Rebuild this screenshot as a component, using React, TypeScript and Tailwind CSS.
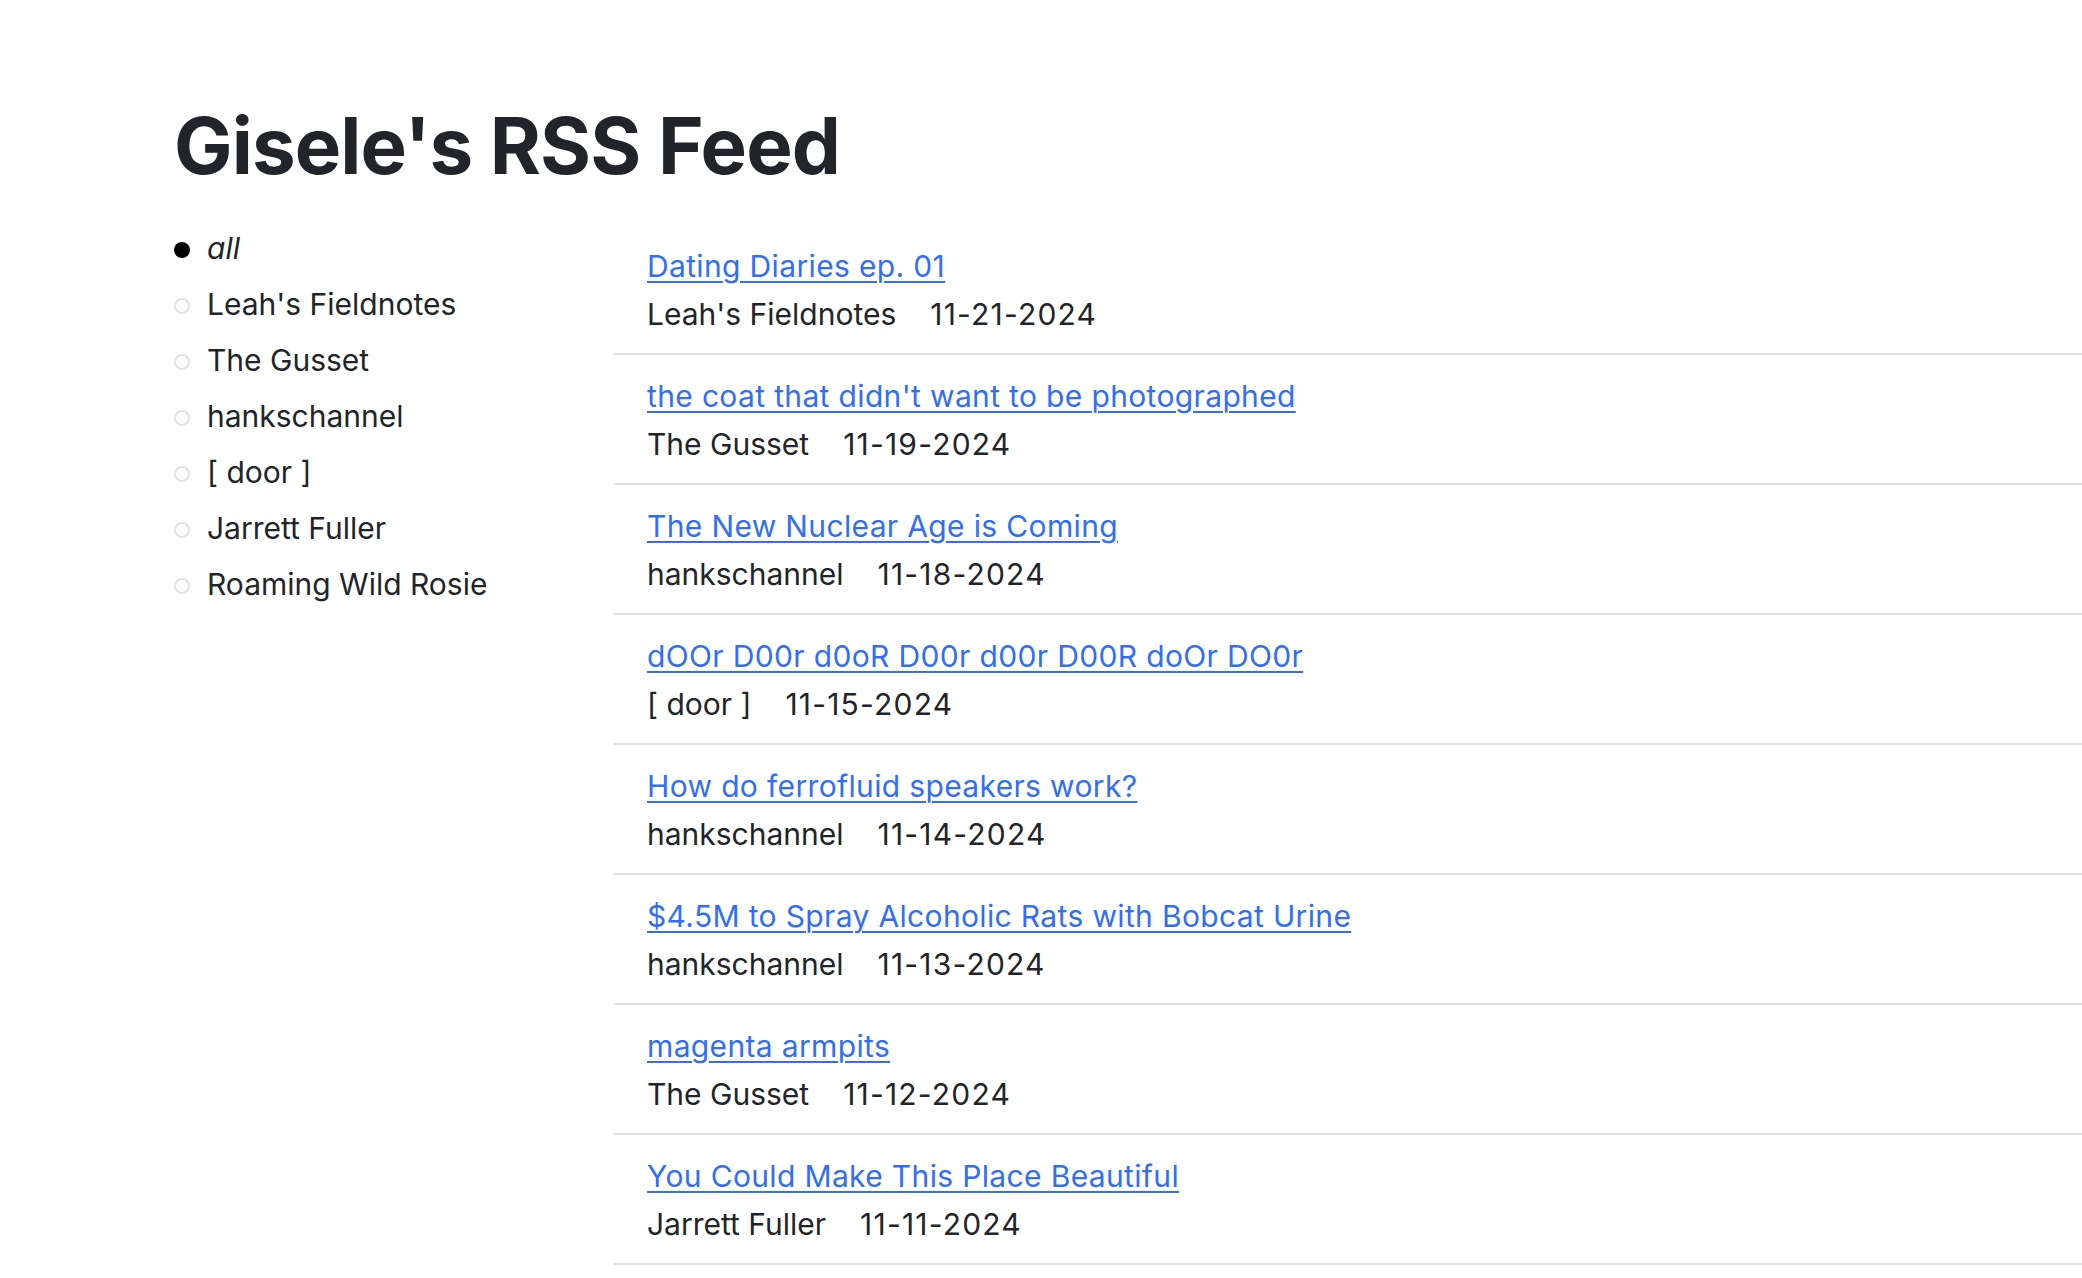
import React from "react";

const feeds = [
  "Leah's Fieldnotes",
  "The Gusset",
  "hankschannel",
  "[ door ]",
  "Jarrett Fuller",
  "Roaming Wild Rosie",
];

const items = [
  { title: "Dating Diaries ep. 01", feed: "Leah's Fieldnotes", date: "11-21-2024" },
  { title: "the coat that didn't want to be photographed", feed: "The Gusset", date: "11-19-2024" },
  { title: "The New Nuclear Age is Coming", feed: "hankschannel", date: "11-18-2024" },
  { title: "dOOr D00r d0oR D00r d00r D00R doOr DO0r", feed: "[ door ]", date: "11-15-2024" },
  { title: "How do ferrofluid speakers work?", feed: "hankschannel", date: "11-14-2024" },
  { title: "$4.5M to Spray Alcoholic Rats with Bobcat Urine", feed: "hankschannel", date: "11-13-2024" },
  { title: "magenta armpits", feed: "The Gusset", date: "11-12-2024" },
  { title: "You Could Make This Place Beautiful", feed: "Jarrett Fuller", date: "11-11-2024" },
];

export default function App() {
  return (
    <div
      className="min-h-[1278px] bg-white text-[#212529] pl-[174px] pt-[99px]"
      style={{ fontFamily: "Inter, 'Noto Sans', sans-serif" }}
    >
      <h1 className="text-[78px] font-bold leading-[1.2] tracking-[-0.9px] text-[#212529]">
        Gisele's RSS Feed
      </h1>
      <div className="mt-[27px] flex items-start">
        <ul className="w-[440px] shrink-0 text-[30px] leading-[56px]">
          <li>
            <span className="mr-[17px] inline-block h-[16px] w-[16px] rounded-full bg-black align-middle"></span>
            <span className="italic">all</span>
          </li>
          {feeds.map((f) => (
            <li key={f}>
              <span className="mr-[17px] inline-block h-[16px] w-[16px] rounded-full border-2 border-[#dee2e6] align-middle"></span>
              <span>{f}</span>
            </li>
          ))}
        </ul>
        <ul className="flex-1 pt-[5px] text-[30px] leading-[48px]">
          {items.map((it) => (
            <li key={it.title} className="border-b-2 border-[#dee2e6] pl-[33px] pt-[17px] pb-[15px]">
              <div>
                <a href="#" className="text-[#316ef5] underline decoration-2 underline-offset-[4px] tracking-[0.35px]">
                  {it.title}
                </a>
              </div>
              <div>
                <span>{it.feed}</span>
                <span className="ml-[34px] tracking-[1.2px]">{it.date}</span>
              </div>
            </li>
          ))}
        </ul>
      </div>
    </div>
  );
}
